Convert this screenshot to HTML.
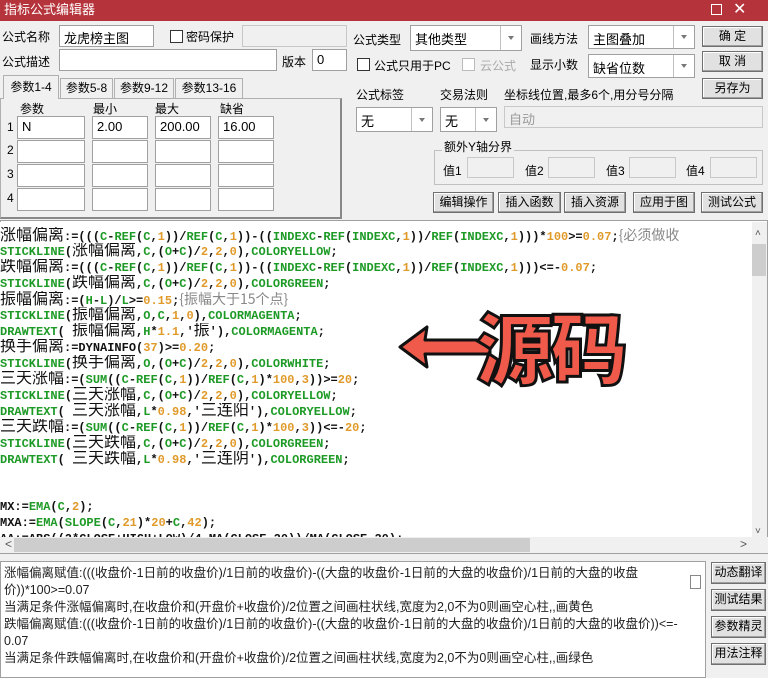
<!DOCTYPE html><html><head><meta charset="utf-8"><style>
*{margin:0;padding:0;box-sizing:border-box}
body{width:768px;height:678px;background:#f0f0f0;font-family:"Liberation Sans","Noto Sans CJK SC",sans-serif;font-size:12px;position:relative;overflow:hidden;color:#000}
.a{position:absolute;white-space:nowrap}
.in{position:absolute;background:#fff;border:1px solid #a0a0a0;padding:2px 4px;font-size:13px}
.gr{background:#f0f0f0;border:1px solid #c8c8c8}
.btn{position:absolute;background:#e1e1e1;border:1px solid #707070;box-shadow:inset -1px -1px #a0a0a0,inset 1px 1px #fff;text-align:center;font-size:12px;line-height:18px}
.cb{position:absolute;width:13px;height:13px;border:1px solid #333;background:#fff}
.cmb{position:absolute;background:#fff;border:1px solid #a0a0a0;font-size:13px;padding:3px 4px}
.cmb:after{content:"";position:absolute;right:0;top:0;bottom:0;width:20px;border-left:1px solid #c0c0c0}
.cmb i{position:absolute;right:7px;top:50%;margin-top:-2px;border:3px solid transparent;border-top:4px solid #777;z-index:2}
#code{position:absolute;left:0;top:222px;width:752px;height:315px;background:#fff;overflow:hidden;font-family:"Liberation Mono",monospace;font-size:12px;font-weight:bold;line-height:16px;padding-top:5px;color:#111}
#code div{height:16px;white-space:pre;overflow:hidden}
.g{color:#1d9a26}.o{color:#e09a2a}.c{font-family:"Liberation Sans","Noto Sans CJK SC",sans-serif;font-weight:normal;font-size:16px;line-height:16px}.m{color:#888;font-weight:normal;font-family:"Noto Sans CJK SC",sans-serif;font-size:14px;line-height:16px}
</style></head><body>
<div class="a" style="left:0;top:0;width:768px;height:21px;background:#b5333a;color:#fff;font-size:13px;line-height:20px;padding-left:4px">指标公式编辑器</div>
<div class="a" style="left:711px;top:4px;width:11px;height:11px;border:1px solid #fff"></div>
<div class="a" style="left:733px;top:0;color:#fff;font-size:16px;line-height:20px">✕</div>

<div class="a" style="left:2px;top:28px;font-size:12px">公式名称</div>
<div class="in" style="left:59px;top:25px;width:95px;height:22px">龙虎榜主图</div>
<div class="cb" style="left:170px;top:30px"></div>
<div class="a" style="left:186px;top:28px">密码保护</div>
<div class="in gr" style="left:242px;top:25px;width:105px;height:22px"></div>
<div class="a" style="left:2px;top:53px">公式描述</div>
<div class="in" style="left:59px;top:49px;width:218px;height:22px"></div>
<div class="a" style="left:282px;top:53px">版本</div>
<div class="in" style="left:312px;top:49px;width:35px;height:22px">0</div>

<div class="a" style="left:0;top:98px;width:342px;height:121px;border:1px solid #b0b0b0;border-right:2px solid #888;border-bottom:2px solid #888;background:#f0f0f0"></div>
<div class="a" style="left:3px;top:75px;width:56px;height:24px;background:#f0f0f0;border:1px solid #b0b0b0;border-bottom:none;text-align:center;line-height:22px">参数1-4</div>
<div class="a" style="left:60px;top:78px;width:53px;height:20px;border:1px solid #b0b0b0;border-bottom:none;text-align:center;line-height:19px">参数5-8</div>
<div class="a" style="left:114px;top:78px;width:60px;height:20px;border:1px solid #b0b0b0;border-bottom:none;text-align:center;line-height:19px">参数9-12</div>
<div class="a" style="left:175px;top:78px;width:68px;height:20px;border:1px solid #b0b0b0;border-bottom:none;text-align:center;line-height:19px">参数13-16</div>
<div class="a" style="left:20px;top:100px">参数</div><div class="a" style="left:93px;top:100px">最小</div><div class="a" style="left:155px;top:100px">最大</div><div class="a" style="left:220px;top:100px">缺省</div>
<div class="a" style="left:7px;top:120px">1</div><div class="a" style="left:7px;top:143px">2</div><div class="a" style="left:7px;top:167px">3</div><div class="a" style="left:7px;top:191px">4</div>
<div class="in" style="left:17px;top:116px;width:68px;height:23px">N</div><div class="in" style="left:92px;top:116px;width:56px;height:23px">2.00</div><div class="in" style="left:155px;top:116px;width:56px;height:23px">200.00</div><div class="in" style="left:218px;top:116px;width:56px;height:23px">16.00</div>
<div class="in" style="left:17px;top:140px;width:68px;height:23px"></div><div class="in" style="left:92px;top:140px;width:56px;height:23px"></div><div class="in" style="left:155px;top:140px;width:56px;height:23px"></div><div class="in" style="left:218px;top:140px;width:56px;height:23px"></div>
<div class="in" style="left:17px;top:164px;width:68px;height:23px"></div><div class="in" style="left:92px;top:164px;width:56px;height:23px"></div><div class="in" style="left:155px;top:164px;width:56px;height:23px"></div><div class="in" style="left:218px;top:164px;width:56px;height:23px"></div>
<div class="in" style="left:17px;top:188px;width:68px;height:23px"></div><div class="in" style="left:92px;top:188px;width:56px;height:23px"></div><div class="in" style="left:155px;top:188px;width:56px;height:23px"></div><div class="in" style="left:218px;top:188px;width:56px;height:23px"></div>

<div class="a" style="left:353px;top:31px">公式类型</div>
<div class="cmb" style="left:410px;top:25px;width:112px;height:26px">其他类型<i></i></div>
<div class="a" style="left:530px;top:30px">画线方法</div>
<div class="cmb" style="left:588px;top:25px;width:107px;height:24px">主图叠加<i></i></div>
<div class="cmb" style="left:588px;top:54px;width:107px;height:24px">缺省位数<i></i></div>
<div class="btn" style="left:702px;top:26px;width:61px;height:21px">确 定</div>
<div class="btn" style="left:702px;top:51px;width:61px;height:21px">取 消</div>
<div class="btn" style="left:702px;top:78px;width:61px;height:21px">另存为</div>
<div class="cb" style="left:357px;top:58px"></div><div class="a" style="left:374px;top:57px">公式只用于PC</div>
<div class="cb" style="left:462px;top:58px;border-color:#bbb"></div><div class="a" style="left:480px;top:57px;color:#aaa">云公式</div>
<div class="a" style="left:530px;top:56px">显示小数</div>
<div class="a" style="left:356px;top:86px">公式标签</div>
<div class="a" style="left:440px;top:86px">交易法则</div>
<div class="a" style="left:504px;top:86px">坐标线位置,最多6个,用分号分隔</div>
<div class="cmb" style="left:356px;top:107px;width:77px;height:25px">无<i></i></div>
<div class="cmb" style="left:440px;top:107px;width:57px;height:25px">无<i></i></div>
<div class="in gr" style="left:504px;top:106px;width:259px;height:22px;color:#999">自动</div>
<div class="a" style="left:434px;top:150px;width:329px;height:35px;border:1px solid #c0c0c0"></div>
<div class="a" style="left:442px;top:138px;background:#f0f0f0;padding:0 2px">额外Y轴分界</div>
<div class="a" style="left:443px;top:162px">值1</div><div class="in gr" style="left:467px;top:157px;width:47px;height:21px"></div>
<div class="a" style="left:525px;top:162px">值2</div><div class="in gr" style="left:548px;top:157px;width:47px;height:21px"></div>
<div class="a" style="left:606px;top:162px">值3</div><div class="in gr" style="left:629px;top:157px;width:47px;height:21px"></div>
<div class="a" style="left:686px;top:162px">值4</div><div class="in gr" style="left:710px;top:157px;width:47px;height:21px"></div>
<div class="btn" style="left:433px;top:192px;width:61px;height:21px">编辑操作</div>
<div class="btn" style="left:498px;top:192px;width:63px;height:21px">插入函数</div>
<div class="btn" style="left:564px;top:192px;width:62px;height:21px">插入资源</div>
<div class="btn" style="left:633px;top:192px;width:62px;height:21px">应用于图</div>
<div class="btn" style="left:701px;top:192px;width:62px;height:21px">测试公式</div>

<div class="a" style="left:0;top:220px;width:768px;height:334px;border:1px solid #a0a0a0;background:#fff"></div>
<div id="code">
<div><span class="c">涨幅偏离</span>:=(((<span class="g">C</span>-<span class="g">REF</span>(<span class="g">C</span>,<span class="o">1</span>))/<span class="g">REF</span>(<span class="g">C</span>,<span class="o">1</span>))-((<span class="g">INDEXC</span>-<span class="g">REF</span>(<span class="g">INDEXC</span>,<span class="o">1</span>))/<span class="g">REF</span>(<span class="g">INDEXC</span>,<span class="o">1</span>)))*<span class="o">100</span>&gt;=<span class="o">0.07</span>;<span class="m">{必须做收</span></div>
<div><span class="g">STICKLINE</span>(<span class="c">涨幅偏离</span>,<span class="g">C</span>,(<span class="g">O</span>+<span class="g">C</span>)/<span class="o">2</span>,<span class="o">2</span>,<span class="o">0</span>),<span class="g">COLORYELLOW</span>;</div>
<div><span class="c">跌幅偏离</span>:=(((<span class="g">C</span>-<span class="g">REF</span>(<span class="g">C</span>,<span class="o">1</span>))/<span class="g">REF</span>(<span class="g">C</span>,<span class="o">1</span>))-((<span class="g">INDEXC</span>-<span class="g">REF</span>(<span class="g">INDEXC</span>,<span class="o">1</span>))/<span class="g">REF</span>(<span class="g">INDEXC</span>,<span class="o">1</span>)))&lt;=-<span class="o">0.07</span>;</div>
<div><span class="g">STICKLINE</span>(<span class="c">跌幅偏离</span>,<span class="g">C</span>,(<span class="g">O</span>+<span class="g">C</span>)/<span class="o">2</span>,<span class="o">2</span>,<span class="o">0</span>),<span class="g">COLORGREEN</span>;</div>
<div><span class="c">振幅偏离</span>:=(<span class="g">H</span>-<span class="g">L</span>)/<span class="g">L</span>&gt;=<span class="o">0.15</span>;<span class="m">{振幅大于15个点}</span></div>
<div><span class="g">STICKLINE</span>(<span class="c">振幅偏离</span>,<span class="g">O</span>,<span class="g">C</span>,<span class="o">1</span>,<span class="o">0</span>),<span class="g">COLORMAGENTA</span>;</div>
<div><span class="g">DRAWTEXT</span>( <span class="c">振幅偏离</span>,<span class="g">H</span>*<span class="o">1.1</span>,'<span class="c">振</span>'),<span class="g">COLORMAGENTA</span>;</div>
<div><span class="c">换手偏离</span>:=DYNAINFO(<span class="o">37</span>)&gt;=<span class="o">0.20</span>;</div>
<div><span class="g">STICKLINE</span>(<span class="c">换手偏离</span>,<span class="g">O</span>,(<span class="g">O</span>+<span class="g">C</span>)/<span class="o">2</span>,<span class="o">2</span>,<span class="o">0</span>),<span class="g">COLORWHITE</span>;</div>
<div><span class="c">三天涨幅</span>:=(<span class="g">SUM</span>((<span class="g">C</span>-<span class="g">REF</span>(<span class="g">C</span>,<span class="o">1</span>))/<span class="g">REF</span>(<span class="g">C</span>,<span class="o">1</span>)*<span class="o">100</span>,<span class="o">3</span>))&gt;=<span class="o">20</span>;</div>
<div><span class="g">STICKLINE</span>(<span class="c">三天涨幅</span>,<span class="g">C</span>,(<span class="g">O</span>+<span class="g">C</span>)/<span class="o">2</span>,<span class="o">2</span>,<span class="o">0</span>),<span class="g">COLORYELLOW</span>;</div>
<div><span class="g">DRAWTEXT</span>( <span class="c">三天涨幅</span>,<span class="g">L</span>*<span class="o">0.98</span>,'<span class="c">三连阳</span>'),<span class="g">COLORYELLOW</span>;</div>
<div><span class="c">三天跌幅</span>:=(<span class="g">SUM</span>((<span class="g">C</span>-<span class="g">REF</span>(<span class="g">C</span>,<span class="o">1</span>))/<span class="g">REF</span>(<span class="g">C</span>,<span class="o">1</span>)*<span class="o">100</span>,<span class="o">3</span>))&lt;=-<span class="o">20</span>;</div>
<div><span class="g">STICKLINE</span>(<span class="c">三天跌幅</span>,<span class="g">C</span>,(<span class="g">O</span>+<span class="g">C</span>)/<span class="o">2</span>,<span class="o">2</span>,<span class="o">0</span>),<span class="g">COLORGREEN</span>;</div>
<div><span class="g">DRAWTEXT</span>( <span class="c">三天跌幅</span>,<span class="g">L</span>*<span class="o">0.98</span>,'<span class="c">三连阴</span>'),<span class="g">COLORGREEN</span>;</div>
<div></div><div></div>
<div>MX:=<span class="g">EMA</span>(<span class="g">C</span>,<span class="o">2</span>);</div>
<div>MXA:=<span class="g">EMA</span>(<span class="g">SLOPE</span>(<span class="g">C</span>,<span class="o">21</span>)*<span class="o">20</span>+<span class="g">C</span>,<span class="o">42</span>);</div>
<div>AA:=ABS((2*CLOSE+HIGH+LOW)/4-MA(CLOSE,20))/MA(CLOSE,20);</div>
</div>
<div class="a" style="left:752px;top:222px;width:15px;height:315px;background:#f0f0f0"></div>
<div class="a" style="left:752px;top:244px;width:14px;height:32px;background:#cdcdcd"></div>
<div class="a" style="left:755px;top:228px;font-size:10px;color:#555">˄</div>
<div class="a" style="left:755px;top:526px;font-size:10px;color:#555">˅</div>
<div class="a" style="left:0;top:537px;width:768px;height:16px;background:#f0f0f0"></div>
<div class="a" style="left:14px;top:538px;width:516px;height:14px;background:#cdcdcd"></div>
<div class="a" style="left:5px;top:537px;color:#555">&lt;</div><div class="a" style="left:740px;top:537px;color:#555">&gt;</div>

<svg class="a" style="left:395px;top:300px" width="100" height="100"><path d="M5 47 L32 27 L30 40 L95 40 L95 54 L30 54 L32 67 Z" fill="#f05a4a" stroke="#111" stroke-width="3" stroke-linejoin="round"/></svg>
<div class="a" style="left:476px;top:300px;font-family:'Noto Sans CJK SC',sans-serif;font-weight:900;font-size:78px;line-height:90px;color:#f05a4a;-webkit-text-stroke:3px #111;letter-spacing:-4px">源码</div>

<div class="a" style="left:0;top:561px;width:706px;height:117px;background:#fff;border:1px solid #a0a0a0"></div>
<div class="a" style="left:4px;top:565px;font-size:12.5px;line-height:17px;white-space:normal;width:690px;color:#222">涨幅偏离赋值:(((收盘价-1日前的收盘价)/1日前的收盘价)-((大盘的收盘价-1日前的大盘的收盘价)/1日前的大盘的收盘<br>价))*100&gt;=0.07<br>当满足条件涨幅偏离时,在收盘价和(开盘价+收盘价)/2位置之间画柱状线,宽度为2,0不为0则画空心柱,,画黄色<br>跌幅偏离赋值:(((收盘价-1日前的收盘价)/1日前的收盘价)-((大盘的收盘价-1日前的大盘的收盘价)/1日前的大盘的收盘价))&lt;=-<br>0.07<br>当满足条件跌幅偏离时,在收盘价和(开盘价+收盘价)/2位置之间画柱状线,宽度为2,0不为0则画空心柱,,画绿色</div>
<div class="a" style="left:690px;top:575px;width:11px;height:14px;border:1px solid #888"></div>
<div class="btn" style="left:711px;top:562px;width:55px;height:22px">动态翻译</div>
<div class="btn" style="left:711px;top:589px;width:55px;height:22px">测试结果</div>
<div class="btn" style="left:711px;top:616px;width:55px;height:22px">参数精灵</div>
<div class="btn" style="left:711px;top:643px;width:55px;height:22px">用法注释</div>
</body></html>
